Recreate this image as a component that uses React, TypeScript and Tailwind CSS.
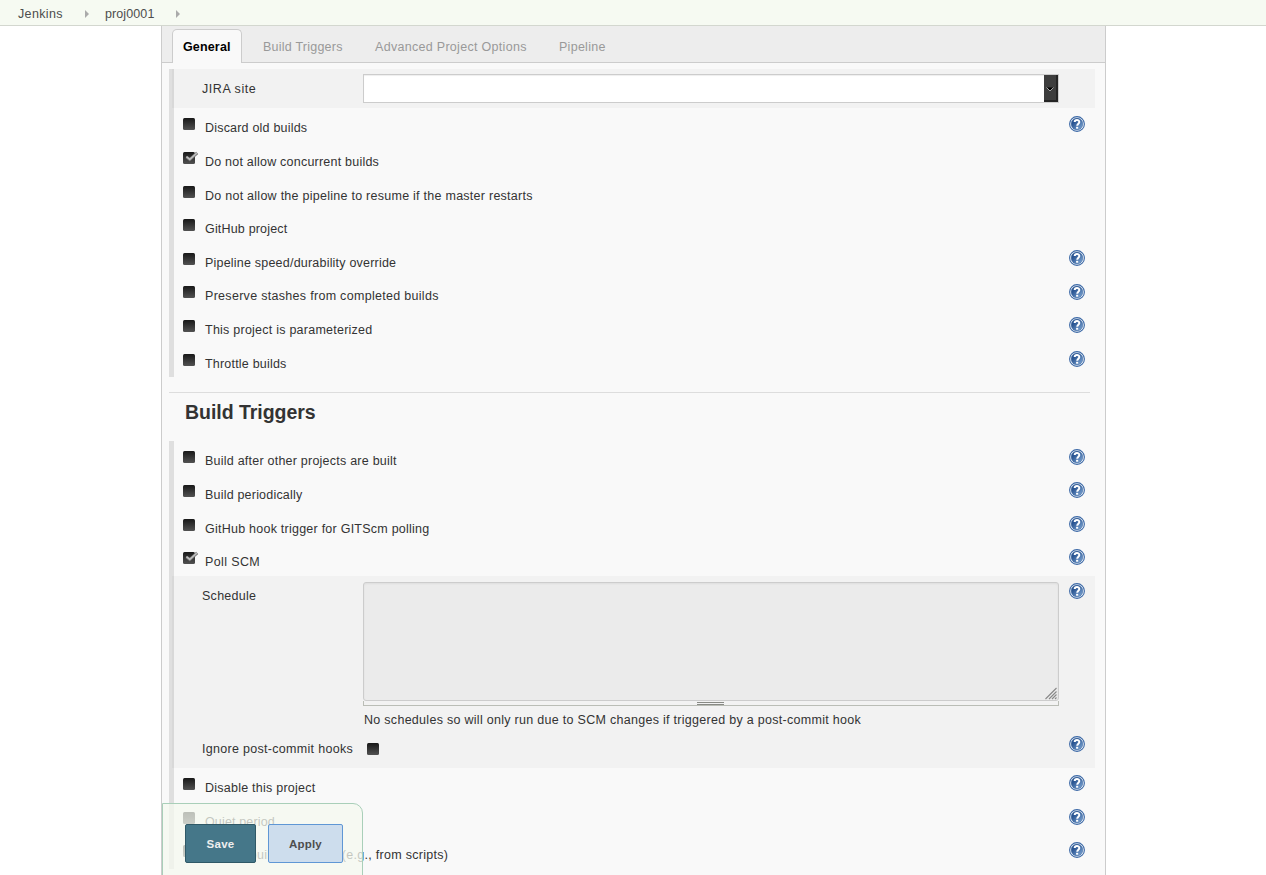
import React from "react";

function HelpIcon() {
  return (
    <svg width="16" height="16" viewBox="0 0 16 16" className="block">
      <defs>
        <linearGradient id="help" x1="0" y1="0" x2="1" y2="1">
          <stop offset="0.3" stopColor="#2a5592" />
          <stop offset="1" stopColor="#86aedb" />
        </linearGradient>
      </defs>
      <circle cx="8" cy="8" r="7.4" fill="#fff" stroke="#3b68a6" strokeWidth="1.1" />
      <circle cx="8" cy="8" r="5.9" fill="url(#help)" stroke="#3b669f" strokeWidth="0.5" />
      <path d="M5.7 6.1C5.7 3.2 10.3 3.2 10.3 6C10.3 7.7 8.2 7.7 8.2 9.8" fill="none" stroke="#fff" strokeWidth="2" />
      <rect x="7.1" y="10.8" width="2.1" height="1.9" fill="#fff" />
    </svg>
  );
}

function Checkbox({ checked = false }: { checked?: boolean }) {
  return (
    <svg width="16" height="12" viewBox="0 0 16 12" className="block shrink-0 overflow-visible">
      <defs>
        <linearGradient id="box" x1="0" y1="0" x2="0" y2="1">
          <stop offset="0" stopColor="#181818" />
          <stop offset="1" stopColor="#525252" />
        </linearGradient>
      </defs>
      <rect width="12" height="12" rx="1.5" fill="url(#box)" />
      {checked && (
        <>
          <path d="M3.4 4.8L6.8 7.6L14.2 0.8" fill="none" stroke="#707070" strokeWidth="3" />
          <path d="M3.4 4.6L6.8 7.4L14 0.8" fill="none" stroke="#bdbdbd" strokeWidth="1.6" />
        </>
      )}
    </svg>
  );
}

type Option = { label: string; height: string; checked?: boolean; help?: string; tracking?: string };

const general: Option[] = [
  { label: "Discard old builds", height: "h-[34px]", help: "pt-[8px]", tracking: "tracking-[0.2px]" },
  { label: "Do not allow concurrent builds", height: "h-[34px]", checked: true, tracking: "tracking-[0.22px]" },
  { label: "Do not allow the pipeline to resume if the master restarts", height: "h-[33px]", tracking: "tracking-[0.26px]" },
  { label: "GitHub project", height: "h-[34px]", tracking: "tracking-[0.18px]" },
  { label: "Pipeline speed/durability override", height: "h-[33px]", help: "pt-[7px]", tracking: "tracking-[0.21px]" },
  { label: "Preserve stashes from completed builds", height: "h-[34px]", help: "pt-[8px]", tracking: "tracking-[0.3px]" },
  { label: "This project is parameterized", height: "h-[34px]", help: "pt-[7px]", tracking: "tracking-[0.24px]" },
  { label: "Throttle builds", height: "h-[33px]", help: "pt-[7px]", tracking: "tracking-[0.2px]" },
];

const triggers: Option[] = [
  { label: "Build after other projects are built", height: "h-[34px]", help: "pt-[8px]", tracking: "tracking-[0.23px]" },
  { label: "Build periodically", height: "h-[34px]", help: "pt-[7px]", tracking: "tracking-[0.2px]" },
  { label: "GitHub hook trigger for GITScm polling", height: "h-[33px]", help: "pt-[7px]", tracking: "tracking-[0.24px]" },
  { label: "Poll SCM", height: "h-[34px]", checked: true, help: "pt-[7px]", tracking: "tracking-[0.38px]" },
];

const others: Option[] = [
  { label: "Disable this project", height: "h-[34px]", help: "pt-[7px]", tracking: "tracking-[0.24px]" },
  { label: "Quiet period", height: "h-[33px]", help: "pt-[7px]", tracking: "tracking-[0.15px]" },
  { label: "Trigger builds remotely (e.g., from scripts)", height: "h-[34px]", help: "pt-[7px]", tracking: "tracking-[0.28px]" },
];

function Row({ option }: { option: Option }) {
  return (
    <div className={`flex items-start pl-[9px] pr-[10px] ${option.height}`}>
      <div className="w-[22px] pt-[10px]">
        <Checkbox checked={option.checked} />
      </div>
      <span className={`grow pt-[12px] leading-[16px] whitespace-nowrap ${option.tracking ?? ""}`}>{option.label}</span>
      {option.help && (
        <div className={option.help}>
          <HelpIcon />
        </div>
      )}
    </div>
  );
}

export default function App() {
  return (
    <div className="relative flex h-[875px] w-[1266px] flex-col overflow-hidden bg-white text-[12.5px] tracking-[0.27px] text-[#333] [font-family:'Liberation_Sans',Arial,sans-serif]">
      <header className="flex h-[26px] shrink-0 items-center border-b border-[#d3d7cf] bg-[#f6faf2] pl-[18px] pt-[2px] text-[#4d4d4d]">
        <span className="w-[67px] leading-[16px] tracking-[0.35px]">Jenkins</span>
        <svg width="4" height="8" className="mr-[16px]"><path d="M0 0L4 4L0 8Z" fill="#aaa" /></svg>
        <span className="w-[71px] leading-[16px] tracking-[0.1px]">proj0001</span>
        <svg width="4" height="8"><path d="M0 0L4 4L0 8Z" fill="#aaa" /></svg>
      </header>

      <main className="ml-[161px] flex h-[849px] w-[945px] flex-col border-x border-[#ccc] bg-[#f9f9f9]">
        <nav className="flex h-[37px] shrink-0 items-start border-b border-[#ccc] bg-[#ededed] pl-[10px] pt-[3px] text-[#999]">
          <div className="h-[34px] w-[70px] rounded-t-[5px] border border-b-0 border-[#ccc] bg-[#f9f9f9] pl-[10px] pt-[9px] font-bold leading-[16px] tracking-[0.15px] text-black">General</div>
          <span className="ml-[21px] w-[112px] pt-[10px] leading-[16px] tracking-[0.23px]">Build Triggers</span>
          <span className="w-[184px] pt-[10px] leading-[16px] tracking-[0.3px]">Advanced Project Options</span>
          <span className="pt-[10px] leading-[16px]">Pipeline</span>
        </nav>

        <section className="ml-[7px] mt-[6px] w-[926px] border-l-[5px] border-[#dfdfdf]">
          <div className="-ml-[2px] flex h-[39px] items-start bg-black/[0.027] pl-[30px]">
            <span className="w-[161px] pt-[12px] leading-[16px] tracking-[0.55px]">JIRA site</span>
            <div className="mt-[5px] flex h-[29px] w-[696px] justify-end border border-[#ccc] bg-white shadow-[inset_0_1px_1px_#eee]">
              <div className="flex h-[27px] w-[14px] items-center justify-center border-b-2 border-r-2 border-[#242424] bg-[#3d3d3d] pt-[3px]">
                <svg width="8" height="5" viewBox="0 0 8 5"><path d="M0.5 0.5H7.5L4 4.2Z" fill="#000" /><path d="M0.5 0.5L4 4L7.5 0.5" fill="none" stroke="#ccc" strokeWidth="0.8" /></svg>
              </div>
            </div>
          </div>
          {general.map((option) => <Row key={option.label} option={option} />)}
        </section>

        <section className="ml-[7px] mt-[15px] h-[49px] w-[921px] border-t border-[#ddd] pl-[16px] pt-[7px]">
          <h2 className="text-[19.5px] font-bold leading-[24px] tracking-[-0.03px]">Build Triggers</h2>
        </section>

        <section className="ml-[7px] w-[926px] border-l-[5px] border-[#dfdfdf]">
          {triggers.map((option) => <Row key={option.label} option={option} />)}
          <div className="-ml-[2px] h-[192px] bg-black/[0.027] pl-[30px] pr-[10px]">
            <div className="flex h-[157px] items-start">
              <span className="w-[161px] pt-[12px] leading-[16px]">Schedule</span>
              <div className="w-[696px] pt-[6px]">
                <div className="flex h-[119px] items-end justify-end rounded-[3px] border border-[#ccc] bg-[#ebebeb] pr-px shadow-[inset_0_1px_2px_#ddd]">
                  <svg width="12" height="13" viewBox="0 0 12 13"><path d="M0.5 12L11.5 1M4 12L11.5 4.5M7 12L11.5 7.5M10 12L11.5 10.5" stroke="#888" strokeWidth="1.1" /></svg>
                </div>
                <div className="flex h-[5px] justify-center border-x border-b border-[#babdb6] pr-px">
                  <div className="mt-px h-[3px] w-[27px] border-y border-[#888a85]" />
                </div>
                <p className="pl-px pt-[6px] leading-[16px] tracking-[0.287px]">No schedules so will only run due to SCM changes if triggered by a post-commit hook</p>
              </div>
              <div className="ml-auto pt-[7px]"><HelpIcon /></div>
            </div>
            <div className="flex items-start">
              <span className="w-[165px] pt-[8px] leading-[16px] whitespace-nowrap tracking-[0.3px]">Ignore post-commit hooks</span>
              <div className="pt-[10px]"><Checkbox /></div>
              <div className="ml-auto pt-[3px]"><HelpIcon /></div>
            </div>
          </div>
          {others.map((option) => <Row key={option.label} option={option} />)}
        </section>
      </main>

      <div className="absolute left-[162px] top-[803px] flex h-[80px] w-[201px] items-start gap-[12px] rounded-tr-[10px] border border-[#a9cfb9] bg-[#f4f8ef]/75 pl-[22px] pt-[20px] text-[11.5px] font-bold">
        <button className="h-[39px] w-[71px] rounded-[2px] border border-[#2f5967] bg-[#457789] pt-[2px] text-[#eee] tracking-[0.3px]">Save</button>
        <button className="h-[39px] w-[75px] rounded-[2px] border border-[#5f97d5] bg-[#cddded] pt-[2px] text-[#4d4d4d] tracking-[0.2px]">Apply</button>
      </div>
    </div>
  );
}
